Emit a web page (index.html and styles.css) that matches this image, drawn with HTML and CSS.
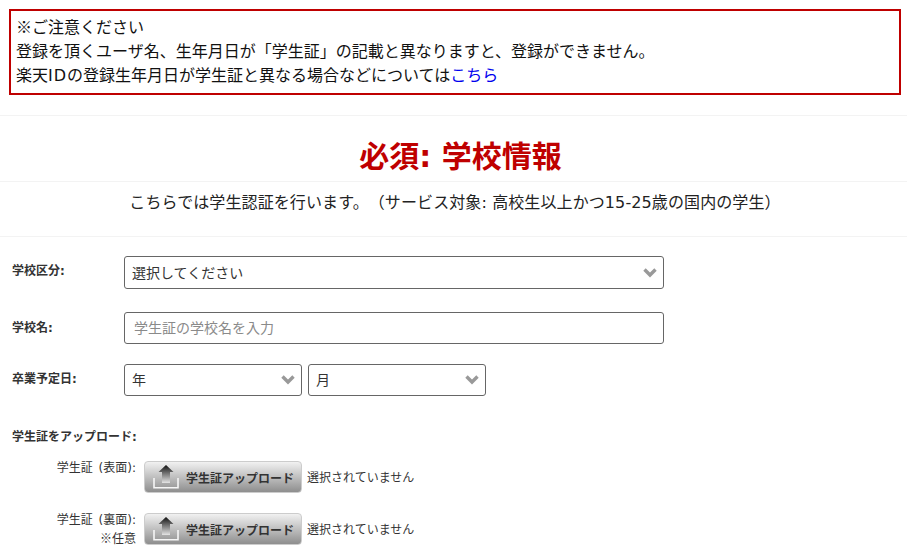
FILE: index.html
```html
<!DOCTYPE html>
<html lang="ja">
<head>
<meta charset="utf-8">
<title>学校情報</title>
<link rel="stylesheet" href="styles.css">
</head>
<body>
<div class="notice">
  <div><span class="mark">※</span>ご注意ください</div>
  <div>登録を頂くユーザ名、生年月日が「学生証」の記載と異なりますと、登録ができません。</div>
  <div>楽天<span class="latin">ID</span>の登録生年月日が学生証と異なる場合などについては<a href="#">こちら</a></div>
</div>
<hr class="rule rule-first">
<h1 class="title">必須: 学校情報</h1>
<hr class="rule">
<p class="lead">こちらでは学生認証を行います。（サービス対象: 高校生以上かつ15-25歳の国内の学生）</p>
<hr class="rule">
<form class="form">
  <div class="row row-type">
    <label class="label">学校区分:</label>
    <div class="select select-wide">選択してください<svg class="chev" viewBox="0 0 14 10"><path d="M1.5 1.5 7 7 12.5 1.5" fill="none" stroke="#999" stroke-width="3.4"/></svg></div>
  </div>
  <div class="row row-name">
    <label class="label label-name">学校名:</label>
    <input class="input" type="text" placeholder="学生証の学校名を入力">
  </div>
  <div class="row row-date">
    <label class="label label-date">卒業予定日:</label>
    <div class="select select-small">年<svg class="chev" viewBox="0 0 14 10"><path d="M1.5 1.5 7 7 12.5 1.5" fill="none" stroke="#999" stroke-width="3.4"/></svg></div>
    <div class="select select-small">月<svg class="chev" viewBox="0 0 14 10"><path d="M1.5 1.5 7 7 12.5 1.5" fill="none" stroke="#999" stroke-width="3.4"/></svg></div>
  </div>
  <div class="upload-title">学生証をアップロード:</div>
  <div class="upload">
    <div class="upload-label">学生証 (表面):</div>
    <div class="upload-btn">
      <svg class="upload-icon" viewBox="0 0 26 24"><defs><linearGradient id="a1" x1="0" y1="0" x2="0" y2="1"><stop offset="0" stop-color="#111"/><stop offset="1" stop-color="#e4e4e4"/></linearGradient></defs><path d="M13 0 20.5 7H17V18H9V7H5.500Z" fill="url(#a1)"/><path d="M1 13V22.800H25V13" fill="none" stroke="#f6f6f6" stroke-width="1.600"/></svg>
      <span>学生証アップロード</span>
    </div>
    <span class="file-state">選択されていません</span>
  </div>
  <div class="upload">
    <div class="upload-label">学生証 (裏面):<br><span class="mark">※</span>任意</div>
    <div class="upload-btn">
      <svg class="upload-icon" viewBox="0 0 26 24"><defs><linearGradient id="a2" x1="0" y1="0" x2="0" y2="1"><stop offset="0" stop-color="#111"/><stop offset="1" stop-color="#e4e4e4"/></linearGradient></defs><path d="M13 0 20.5 7H17V18H9V7H5.500Z" fill="url(#a2)"/><path d="M1 13V22.800H25V13" fill="none" stroke="#f6f6f6" stroke-width="1.600"/></svg>
      <span>学生証アップロード</span>
    </div>
    <span class="file-state">選択されていません</span>
  </div>
</form>
</body>
</html>
```
FILE: styles.css
```css
* { box-sizing: border-box; }
html, body { margin: 0; padding: 0; background: #fff; height: 549px; overflow: hidden; }
body { font-family: "DejaVu Sans", "Noto Sans CJK JP", sans-serif; font-size: 16px; color: #111; text-spacing-trim: space-all; }
.mark { font-family: "Noto Sans CJK JP", sans-serif; }
.latin { letter-spacing: 1px; }
.notice { margin: 9px 6px 0 9px; height: 86px; padding: 3px 5px; border: 2px solid #bf0000; line-height: 24px; }
.notice a { color: #0000ee; text-decoration: none; }
.rule { margin: 0; border: 0; border-top: 1px solid #f3f3f3; }
.rule-first { margin-top: 20px; }
.title { margin: 0; height: 65px; padding: 21px 0 0 14px; text-align: center; font-size: 30px; line-height: 40px; font-weight: 700; color: #bf0000; }
.lead { margin: 0; height: 54px; padding: 9px 0 0 3px; text-align: center; line-height: 24px; color: #222; letter-spacing: .1px; }
.form { padding: 0 12px; }
.row { display: flex; align-items: center; gap: 6px; }
.row-type { margin-top: 19px; height: 33px; }
.row-name { margin-top: 23px; height: 32px; }
.row-date { margin-top: 20px; height: 32px; }
.label { width: 106px; flex: none; font-size: 12px; line-height: 16px; font-weight: 700; color: #333; margin-bottom: 4px; }
.label-name { margin-bottom: 0; }
.label-date { margin-bottom: 2px; }
.select, .input { height: 100%; border: 1px solid #666; border-radius: 3px; background: #fff; font-family: inherit; font-size: 14px; color: #333; }
.select { display: flex; align-items: center; justify-content: space-between; padding: 0 6px 2px 7px; }
.select-wide { width: 540px; }
.select-small { width: 178px; }
.chev { width: 14px; height: 10px; margin-top: 2px; }
.input { width: 540px; padding: 0 9px 1px; outline: none; }
.input::placeholder { color: #8a8a8a; opacity: 1; }
.upload-title { margin-top: 33px; font-size: 12px; font-weight: 700; line-height: 16px; color: #333; }
.upload { display: flex; align-items: flex-start; margin-top: 16px; }
.upload + .upload { margin-top: 19px; }
.upload-label { width: 124px; text-align: right; font-size: 12px; line-height: 18px; word-spacing: 2px; color: #333; flex: none; margin-top: -2px; }
.upload-btn { display: flex; align-items: center; gap: 7px; width: 158px; height: 32px; margin-left: 8px; padding-left: 8px; border: 1px solid #ccc; border-radius: 4px; background: linear-gradient(#f1f1f1, #8e8e8e); font-size: 12px; font-weight: 700; color: #333; white-space: nowrap; overflow: hidden; }
.upload-icon { width: 26px; height: 24px; flex: none; }
.file-state { margin-left: 5px; padding-top: 1px; font-size: 12px; line-height: 32px; color: #333; }
```
